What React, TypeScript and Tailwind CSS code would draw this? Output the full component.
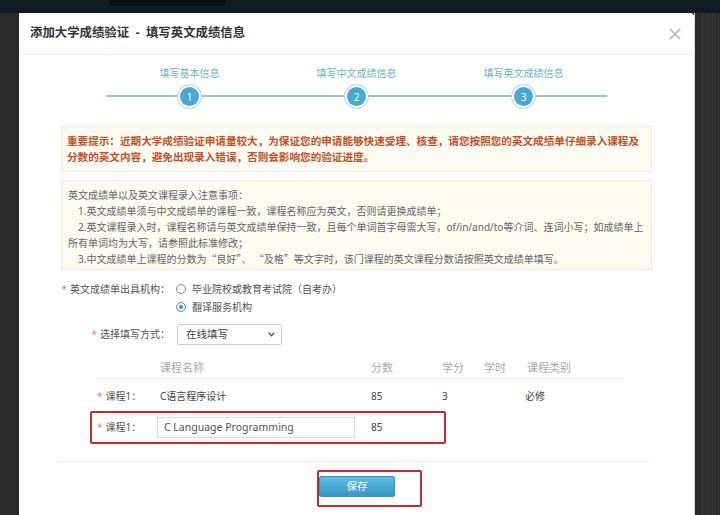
import React from "react";

function Step({ n, label }: { n: number; label: string }) {
  return (
    <div className="flex flex-col items-center relative z-10">
      <div className="text-[10px] leading-[14px] text-[#71b0cc] whitespace-nowrap">{label}</div>
      <div className="mt-[4px] w-[25px] h-[25px] rounded-full border border-[#a8d2e4] bg-white p-[2px]">
        <div className="w-full h-full rounded-full bg-[#4aa8d8] flex items-center justify-center text-white text-[10px] leading-none">
          {n}
        </div>
      </div>
    </div>
  );
}

function Star() {
  return <span className="text-[#d98c8c] mr-[3px]">*</span>;
}

function Q({ children }: { children: React.ReactNode }) {
  return <span className="font-['Noto_Sans_CJK_SC',sans-serif]">{children}</span>;
}

export default function App() {
  return (
    <div className="w-[720px] h-[515px] overflow-hidden flex flex-col bg-[#2b2b2b] font-['Noto_Sans','Noto_Sans_CJK_SC',sans-serif]">
      <div className="h-[13px] shrink-0 bg-[#0f1c22] flex">
        <div className="ml-[110px] w-[115px] h-[6px] bg-[#0a1115]" />
      </div>
      <div className="flex flex-1 min-h-0">
        <div className="w-[19px] bg-[#2a2a2a]" />
        <div className="w-[675px] bg-white rounded-tr-[4px] flex flex-col">
          {/* header */}
          <div className="h-[42px] shrink-0 flex items-center justify-between pl-[11px] pr-[13px] border-b border-[#f1f1f1]">
            <div className="text-[12.4px] font-bold text-[#333] leading-none whitespace-nowrap">
              添加大学成绩验证&nbsp;&nbsp;-&nbsp;&nbsp;填写英文成绩信息
            </div>
            <svg width="12" height="12" viewBox="0 0 12 12">
              <path d="M1 1L11 11M11 1L1 11" stroke="#c2c2c2" strokeWidth="1.8" />
            </svg>
          </div>

          {/* steps */}
          <div className="pt-[11px] pl-[87px]">
            <div className="relative grid grid-cols-[167px_167px_167px] w-[501px]">
              <div className="absolute left-0 right-0 top-[29px] h-[2px] bg-[#9cc3d1]" />
              <Step n={1} label="填写基本信息" />
              <Step n={2} label="填写中文成绩信息" />
              <Step n={3} label="填写英文成绩信息" />
            </div>
          </div>

          {/* alert */}
          <div className="mt-[17px] mx-[42px] border border-[#efecdc] bg-[#fbfbf1] px-[5px] py-[6px] text-[10.6px] leading-[16px] font-bold text-[#c4502a] whitespace-nowrap">
            <div>重要提示：近期大学成绩验证申请量较大，为保证您的申请能够快速受理、核查，请您按照您的英文成绩单仔细录入课程及</div>
            <div>分数的英文内容，避免出现录入错误，否则会影响您的验证进度。</div>
          </div>

          {/* info */}
          <div className="mt-[8px] mx-[42px] border border-[#efecdc] bg-[#fbfbf1] px-[6px] pt-[6px] pb-[2px] text-[10px] leading-[16px] text-[#666] whitespace-nowrap">
            <div>英文成绩单以及英文课程录入注意事项：</div>
            <div className="pl-[10px]">1.英文成绩单须与中文成绩单的课程一致，课程名称应为英文，否则请更换成绩单；</div>
            <div className="pl-[10px]">2.英文课程录入时，课程名称请与英文成绩单保持一致，且每个单词首字母需大写，of/in/and/to等介词、连词小写；如成绩单上</div>
            <div>所有单词均为大写，请参照此标准修改；</div>
            <div className="pl-[10px]">
              3.中文成绩单上课程的分数为<Q>“</Q>良好<Q>”</Q>、<Q> “</Q>及格<Q>”</Q>等文字时，该门课程的英文课程分数请按照英文成绩单填写。
            </div>
          </div>

          {/* form */}
          <div className="mt-[10px] text-[10px] text-[#555]">
            <div className="flex items-center h-[18px]">
              <div className="w-[151px] text-right whitespace-nowrap">
                <Star />英文成绩单出具机构：
              </div>
              <div className="ml-[6px] flex items-center">
                <span className="w-[10px] h-[10px] rounded-full border border-[#8a8a8a] bg-white" />
                <span className="ml-[6px] whitespace-nowrap">毕业院校或教育考试院（自考办）</span>
              </div>
            </div>
            <div className="flex items-center h-[18px]">
              <div className="w-[151px]" />
              <div className="ml-[6px] flex items-center">
                <span className="w-[10px] h-[10px] rounded-full border border-[#3d8ee0] bg-white p-[2px] flex">
                  <span className="flex-1 rounded-full bg-[#3d8ee0]" />
                </span>
                <span className="ml-[6px] whitespace-nowrap">翻译服务机构</span>
              </div>
            </div>
            <div className="mt-[8px] flex items-center h-[21px]">
              <div className="w-[151px] text-right whitespace-nowrap">
                <Star />选择填写方式：
              </div>
              <div className="ml-[7px] w-[105px] h-[21px] border border-[#cfcfcf] rounded-[2px] flex items-center justify-between pl-[8px] pr-[6px] text-[10.5px] text-[#444]">
                <span>在线填写</span>
                <svg width="7" height="5" viewBox="0 0 7 5">
                  <path d="M0.8 0.8L3.5 3.8L6.2 0.8" stroke="#555" strokeWidth="1.3" fill="none" />
                </svg>
              </div>
            </div>

            {/* table */}
            <div className="mt-[13px] ml-[76px] w-[528px]">
              <div className="grid grid-cols-[62px_211px_71px_42px_43px_99px] h-[21px] items-center border-b border-[#e8e8e8] text-[11px] text-[#aaa]">
                <div />
                <div className="pl-[3px]">课程名称</div>
                <div className="pl-[3px]">分数</div>
                <div className="pl-[3px]">学分</div>
                <div className="pl-[3px]">学时</div>
                <div className="pl-[3px]">课程类别</div>
              </div>
              <div className="grid grid-cols-[62px_211px_71px_42px_43px_99px] h-[32px] pt-[3px] items-center text-[10px] text-[#444]">
                <div className="pl-[2px] whitespace-nowrap text-[#555]">
                  <Star />课程1：
                </div>
                <div className="pl-[3px]">C语言程序设计</div>
                <div className="pl-[3px]">85</div>
                <div className="pl-[3px]">3</div>
                <div />
                <div className="pl-[1px]">必修</div>
              </div>
              <div className="relative grid grid-cols-[62px_211px_71px_42px_43px_99px] h-[33px] items-center text-[10px] text-[#444]">
                <div className="pl-[2px] whitespace-nowrap text-[#555]">
                  <Star />课程1：
                </div>
                <div>
                  <div className="w-[198px] h-[21px] border border-[#dcdcdc] flex items-center px-[6px] text-[10.5px] text-[#555] whitespace-nowrap">
                    C Language Programming
                  </div>
                </div>
                <div className="pl-[3px]">85</div>
                <div />
                <div />
                <div />
                <div className="absolute left-[-5px] top-0 w-[356px] h-[33px] border-2 border-[#c62a2e] rounded-[2px]" />
              </div>
            </div>
          </div>

          <div className="mt-[17px] ml-[39px] mr-[42px] h-px bg-[#efefef]" />

          <div className="mt-[14px] ml-[300px] relative w-[76px]">
            <div className="w-[76px] h-[21px] rounded-[2px] border border-[#3b92ba] bg-linear-to-b from-[#5fbee3] to-[#3897c4] flex items-center justify-center text-white text-[10.5px]">
              保存
            </div>
            <div className="absolute left-[-2px] top-[-6px] w-[105px] h-[37px] border-2 border-[#c62a2e] rounded-[2px]" />
          </div>
        </div>
        <div className="flex-1 bg-[#2e2e2e] flex">
          <div className="w-[1px] bg-[#d8d8d8]" />
          <div className="w-[7px] bg-[#2b2b2b]" />
          <div className="w-[1px] bg-[#3c3c3c]" />
          <div className="w-[4px]" />
          <div className="w-[1px] bg-[#3a3a3a]" />
          <div className="w-[4px]" />
          <div className="w-[1px] bg-[#393939]" />
        </div>
      </div>
    </div>
  );
}
